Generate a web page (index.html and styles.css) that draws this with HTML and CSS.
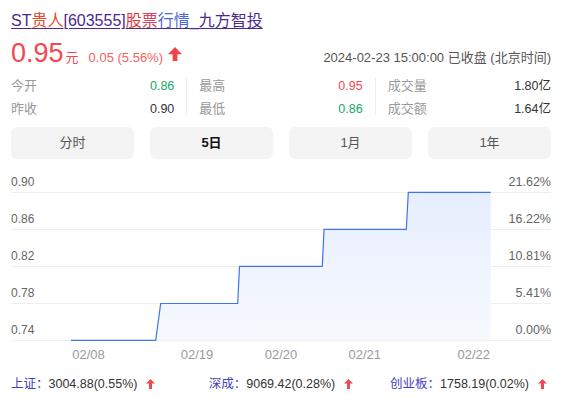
FILE: index.html
```html
<!DOCTYPE html>
<html lang="zh-CN">
<head>
<meta charset="utf-8">
<title>ST贵人[603555]股票行情</title>
<link rel="stylesheet" href="styles.css">
</head>
<body>
<div class="page">
  <a class="title" href="#"><span class="c-purple">ST</span><span class="c-orange">贵人</span><span class="c-purple">[603555]</span><span class="c-red">股</span><span class="c-rose">票</span><span class="c-blue">行情</span><span class="c-purple">_九方智投</span></a>

  <div class="price-row">
    <span class="price">0.95</span><span class="unit">元</span>
    <span class="change">0.05 (5.56%)</span>
    <svg class="arrow" width="14" height="14" viewBox="0 0 14 14"><polygon points="7,0 14,7.3 9.4,7.3 9.4,14 4.6,14 4.6,7.3 0,7.3" fill="#f2434a"/></svg>
    <span class="time">2024-02-23 15:00:00 已收盘 (北京时间)</span>
  </div>

  <div class="stats">
    <div class="col">
      <div class="stat"><span class="label">今开</span><span class="val green">0.86</span></div>
      <div class="stat"><span class="label">昨收</span><span class="val">0.90</span></div>
    </div>
    <div class="divider"></div>
    <div class="col">
      <div class="stat"><span class="label">最高</span><span class="val red">0.95</span></div>
      <div class="stat"><span class="label">最低</span><span class="val green">0.86</span></div>
    </div>
    <div class="divider"></div>
    <div class="col">
      <div class="stat"><span class="label">成交量</span><span class="val">1.80亿</span></div>
      <div class="stat"><span class="label">成交额</span><span class="val">1.64亿</span></div>
    </div>
  </div>

  <div class="tabs">
    <div class="tab">分时</div>
    <div class="tab active">5日</div>
    <div class="tab">1月</div>
    <div class="tab">1年</div>
  </div>

  <svg class="chart" width="540" height="192" viewBox="0 0 540 192">
    <defs>
      <linearGradient id="fill" x1="0" y1="0" x2="0" y2="1">
        <stop offset="0" stop-color="#e6eefd"/>
        <stop offset="1" stop-color="#f7f9ff"/>
      </linearGradient>
    </defs>
    <g stroke="#eeeeee" stroke-width="1">
      <line x1="0" y1="20.5" x2="540" y2="20.5"/>
      <line x1="0" y1="57.5" x2="540" y2="57.5"/>
      <line x1="0" y1="94.5" x2="540" y2="94.5"/>
      <line x1="0" y1="131.5" x2="540" y2="131.5"/>
      <line x1="0" y1="168.5" x2="540" y2="168.5"/>
    </g>
    <polygon fill="url(#fill)" points="60,168.3 144.7,168.3 149.7,131.5 226.7,131.5 228.5,94.3 311.3,94.3 313,57.3 395.3,57.3 397.3,20.3 479.7,20.3 479.7,168.3"/>
    <polyline fill="none" stroke="#3f74ef" stroke-width="1.2" points="60,168.3 144.7,168.3 149.7,131.5 226.7,131.5 228.5,94.3 311.3,94.3 313,57.3 395.3,57.3 397.3,20.3 479.7,20.3"/>
    <g class="ylab">
      <text x="0" y="13.7">0.90</text>
      <text x="0" y="50.7">0.86</text>
      <text x="0" y="87.7">0.82</text>
      <text x="0" y="124.7">0.78</text>
      <text x="0" y="161.7">0.74</text>
    </g>
    <g class="ylab right" text-anchor="end">
      <text x="540" y="13.7">21.62%</text>
      <text x="540" y="50.7">16.22%</text>
      <text x="540" y="87.7">10.81%</text>
      <text x="540" y="124.7">5.41%</text>
      <text x="540" y="161.7">0.00%</text>
    </g>
    <g class="xlab" text-anchor="middle">
      <text x="77.5" y="186.7">02/08</text>
      <text x="186" y="186.7">02/19</text>
      <text x="270" y="186.7">02/20</text>
      <text x="353.7" y="186.7">02/21</text>
      <text x="462.7" y="186.7">02/22</text>
    </g>
  </svg>

  <div class="indices">
    <div class="idx first"><span class="name">上证：</span><span class="num">3004.88(0.55%)</span><svg class="mini" width="9" height="10" viewBox="0 0 9 10"><polygon points="4.5,0 9,4.6 6,4.6 6,10 3,10 3,4.6 0,4.6" fill="#f2494f"/></svg></div>
    <div class="idx mid"><span class="name">深成：</span><span class="num">9069.42(0.28%)</span><svg class="mini" width="9" height="10" viewBox="0 0 9 10"><polygon points="4.5,0 9,4.6 6,4.6 6,10 3,10 3,4.6 0,4.6" fill="#f2494f"/></svg></div>
    <div class="idx last"><span class="name">创业板：</span><span class="num">1758.19(0.02%)</span><svg class="mini" width="9" height="10" viewBox="0 0 9 10"><polygon points="4.5,0 9,4.6 6,4.6 6,10 3,10 3,4.6 0,4.6" fill="#f2494f"/></svg></div>
  </div>
</div>
</body>
</html>
```

FILE: styles.css
```css
html, body {
  margin: 0;
  padding: 0;
  background: #ffffff;
}

body {
  font-family: "Liberation Sans", Arial, "Noto Sans CJK SC", sans-serif;
  color: #333333;
}

.page {
  width: 540px;
  margin-left: 11px;
  padding-top: 9px;
}

.title {
  display: block;
  font-size: 16px;
  line-height: 24px;
  height: 24px;
  text-decoration: underline;
  text-decoration-color: #4b2a8c;
  text-underline-offset: 2px;
  color: #4b2a8c;
  white-space: nowrap;
}

.c-purple { color: #4b2a8c; }
.c-orange { color: #e24a2a; }
.c-red { color: #e23a3c; }
.c-rose { color: #d3445e; }
.c-blue { color: #4d6bd6; }

.price-row {
  display: flex;
  align-items: baseline;
  margin-top: 2px;
  height: 36px;
  line-height: 36px;
}

.price {
  font-size: 27px;
  color: #f4474f;
}

.unit {
  font-size: 13px;
  color: #f4474f;
  margin-left: 2px;
}

.change {
  font-size: 13px;
  color: #f35f62;
  margin-left: 10px;
}

.arrow {
  margin-left: 5px;
  align-self: center;
  position: relative;
  top: 1px;
}

.time {
  margin-left: auto;
  font-size: 13px;
  color: #555555;
}

.stats {
  display: grid;
  grid-template-columns: 1fr 1px 1fr 1px 1fr;
  column-gap: 12px;
  margin-top: 3px;
}

.col {
  display: flex;
  flex-direction: column;
}

.stat {
  display: flex;
  justify-content: space-between;
  align-items: baseline;
  height: 23px;
  line-height: 23px;
}

.label {
  font-size: 13px;
  color: #999999;
}

.val {
  font-size: 12.5px;
  color: #333333;
}

.val.green { color: #14a86c; }
.val.red { color: #f4474f; }

.divider {
  background: #eeeeee;
  margin: 4px 0 5px;
}

.tabs {
  display: grid;
  grid-template-columns: repeat(4, 1fr);
  column-gap: 16px;
  margin-top: 7px;
}

.tab {
  height: 32px;
  line-height: 32px;
  text-align: center;
  background: #f4f4f4;
  border-radius: 6px;
  font-size: 13px;
  color: #555555;
}

.tab.active {
  color: #111111;
  font-weight: bold;
}

.chart {
  display: block;
  margin-top: 13px;
  overflow: visible;
}

.ylab {
  font-size: 12px;
  fill: #666666;
}

.ylab.right {
  font-size: 12.5px;
}

.xlab {
  font-size: 13px;
  fill: #9a9a9a;
}

.indices {
  display: grid;
  grid-template-columns: repeat(3, 1fr);
  margin-top: 10px;
  padding-right: 4px;
  font-size: 12.5px;
  line-height: 20px;
}

.idx {
  display: flex;
  align-items: center;
  white-space: nowrap;
}

.idx.first { justify-self: start; }
.idx.mid { justify-self: center; position: relative; left: 2px; }
.idx.last { justify-self: end; }

.name {
  color: #4140c2;
}

.num {
  color: #333333;
}

.mini {
  margin-left: 9px;
}
```
